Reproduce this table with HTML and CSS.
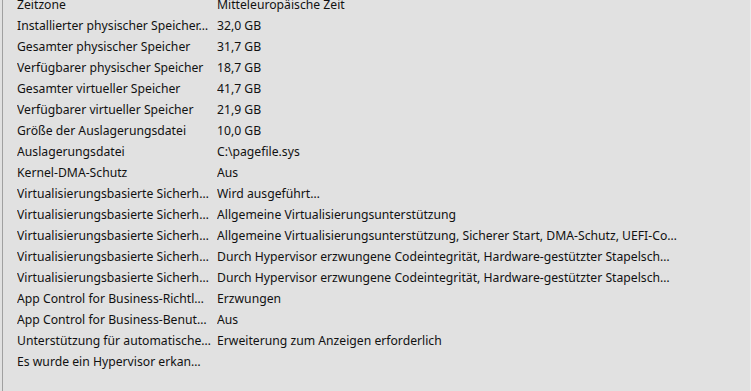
FILE: index.html
```html
<!DOCTYPE html>
<html lang="de">
<head>
<meta charset="utf-8">
<title>Systeminformationen</title>
<link rel="stylesheet" href="styles.css">
</head>
<body>
<div class="pane">
  <div class="list">
    <div class="row"><span class="item">Zeitzone</span><span class="value">Mitteleuropäische Zeit</span></div>
    <div class="row"><span class="item">Installierter physischer Speicher…</span><span class="value">32,0 GB</span></div>
    <div class="row"><span class="item">Gesamter physischer Speicher</span><span class="value">31,7 GB</span></div>
    <div class="row"><span class="item">Verfügbarer physischer Speicher</span><span class="value">18,7 GB</span></div>
    <div class="row"><span class="item">Gesamter virtueller Speicher</span><span class="value">41,7 GB</span></div>
    <div class="row"><span class="item">Verfügbarer virtueller Speicher</span><span class="value">21,9 GB</span></div>
    <div class="row"><span class="item">Größe der Auslagerungsdatei</span><span class="value">10,0 GB</span></div>
    <div class="row"><span class="item">Auslagerungsdatei</span><span class="value">C:\pagefile.sys</span></div>
    <div class="row"><span class="item">Kernel-DMA-Schutz</span><span class="value">Aus</span></div>
    <div class="row"><span class="item">Virtualisierungsbasierte Sicherh…</span><span class="value">Wird ausgeführt…</span></div>
    <div class="row"><span class="item">Virtualisierungsbasierte Sicherh…</span><span class="value">Allgemeine Virtualisierungsunterstützung</span></div>
    <div class="row"><span class="item">Virtualisierungsbasierte Sicherh…</span><span class="value">Allgemeine Virtualisierungsunterstützung, Sicherer Start, DMA-Schutz, UEFI-Co…</span></div>
    <div class="row"><span class="item">Virtualisierungsbasierte Sicherh…</span><span class="value">Durch Hypervisor erzwungene Codeintegrität, Hardware-gestützter Stapelsch…</span></div>
    <div class="row"><span class="item">Virtualisierungsbasierte Sicherh…</span><span class="value">Durch Hypervisor erzwungene Codeintegrität, Hardware-gestützter Stapelsch…</span></div>
    <div class="row"><span class="item">App Control for Business-Richtl…</span><span class="value">Erzwungen</span></div>
    <div class="row"><span class="item">App Control for Business-Benut…</span><span class="value">Aus</span></div>
    <div class="row"><span class="item">Unterstützung für automatische…</span><span class="value">Erweiterung zum Anzeigen erforderlich</span></div>
    <div class="row"><span class="item">Es wurde ein Hypervisor erkan…</span><span class="value"></span></div>
  </div>
</div>
</body>
</html>
```

FILE: styles.css
```css
html, body {
  margin: 0;
  padding: 0;
  height: 100%;
  overflow: hidden;
  background: #e1e1e1;
}

.pane {
  height: 100%;
  margin-left: 2px;
  border-left: 1px solid #a0a0a0;
  border-right: 1px solid #ebebeb;
  background: #e1e1e1;
  font-family: "Noto Sans", "Segoe UI", sans-serif;
  font-size: 12.2px;
  color: #111111;
  overflow: hidden;
}

.list {
  margin-top: -6px;
  display: flex;
  flex-direction: column;
}

.row {
  display: grid;
  grid-template-columns: 200px 1fr;
  height: 21px;
  align-items: center;
  padding-left: 14px;
  white-space: nowrap;
}

.item, .value {
  overflow: hidden;
  text-overflow: clip;
}
```
